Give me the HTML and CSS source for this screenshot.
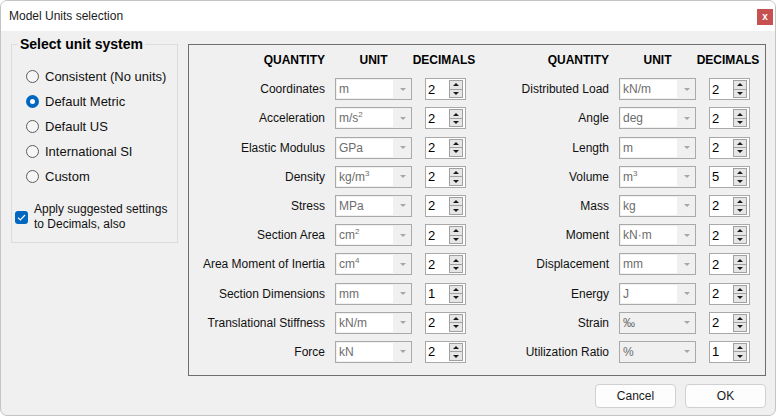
FILE: index.html
```html
<!DOCTYPE html>
<html lang="en">
  <head>
    <meta charset="utf-8" />
    <title>Model Units selection</title>
    <link rel="stylesheet" href="styles.css">
  </head>
  <body>
    <div class="window">
      <div class="titlebar">
        <span class="title">Model Units selection</span>
        <span class="close">x</span>
      </div>

      <div class="client">
        <div class="top">
          <fieldset class="system">
            <legend>Select unit system</legend>
            <div class="radio"><span class="dot"></span>Consistent (No units)</div>
            <div class="radio on"><span class="dot"></span>Default Metric</div>
            <div class="radio"><span class="dot"></span>Default US</div>
            <div class="radio"><span class="dot"></span>International SI</div>
            <div class="radio"><span class="dot"></span>Custom</div>
            <div class="check">
              <span class="box">
                <svg width="9" height="7" viewBox="0 0 9 7"><path d="M1 3.6 L3.4 6 L8 1" fill="none" stroke="#fff" stroke-width="1.2"/></svg>
              </span>
              <span>Apply suggested settings<br>to Decimals, also</span>
            </div>
          </fieldset>

          <div class="units">
            <div class="col">
              <span class="head qty">QUANTITY</span>
              <span class="head">UNIT</span>
              <span class="head">DECIMALS</span>

              <span class="qlabel">Coordinates</span>
              <div class="combo"><span class="field">m</span><span class="arrow"></span></div>
              <div class="spin"><span class="val">2</span><span class="btns"><i class="up"></i><i class="down"></i></span></div>

              <span class="qlabel">Acceleration</span>
              <div class="combo"><span class="field">m/s<sup>2</sup></span><span class="arrow"></span></div>
              <div class="spin"><span class="val">2</span><span class="btns"><i class="up"></i><i class="down"></i></span></div>

              <span class="qlabel">Elastic Modulus</span>
              <div class="combo"><span class="field">GPa</span><span class="arrow"></span></div>
              <div class="spin"><span class="val">2</span><span class="btns"><i class="up"></i><i class="down"></i></span></div>

              <span class="qlabel">Density</span>
              <div class="combo"><span class="field">kg/m<sup>3</sup></span><span class="arrow"></span></div>
              <div class="spin"><span class="val">2</span><span class="btns"><i class="up"></i><i class="down"></i></span></div>

              <span class="qlabel">Stress</span>
              <div class="combo"><span class="field">MPa</span><span class="arrow"></span></div>
              <div class="spin"><span class="val">2</span><span class="btns"><i class="up"></i><i class="down"></i></span></div>

              <span class="qlabel">Section Area</span>
              <div class="combo"><span class="field">cm<sup>2</sup></span><span class="arrow"></span></div>
              <div class="spin"><span class="val">2</span><span class="btns"><i class="up"></i><i class="down"></i></span></div>

              <span class="qlabel">Area Moment of Inertia</span>
              <div class="combo"><span class="field">cm<sup>4</sup></span><span class="arrow"></span></div>
              <div class="spin"><span class="val">2</span><span class="btns"><i class="up"></i><i class="down"></i></span></div>

              <span class="qlabel">Section Dimensions</span>
              <div class="combo"><span class="field">mm</span><span class="arrow"></span></div>
              <div class="spin"><span class="val">1</span><span class="btns"><i class="up"></i><i class="down"></i></span></div>

              <span class="qlabel">Translational Stiffness</span>
              <div class="combo"><span class="field">kN/m</span><span class="arrow"></span></div>
              <div class="spin"><span class="val">2</span><span class="btns"><i class="up"></i><i class="down"></i></span></div>

              <span class="qlabel">Force</span>
              <div class="combo"><span class="field">kN</span><span class="arrow"></span></div>
              <div class="spin"><span class="val">2</span><span class="btns"><i class="up"></i><i class="down"></i></span></div>
            </div>

            <div class="col">
              <span class="head qty">QUANTITY</span>
              <span class="head">UNIT</span>
              <span class="head">DECIMALS</span>

              <span class="qlabel">Distributed Load</span>
              <div class="combo"><span class="field">kN/m</span><span class="arrow"></span></div>
              <div class="spin"><span class="val">2</span><span class="btns"><i class="up"></i><i class="down"></i></span></div>

              <span class="qlabel">Angle</span>
              <div class="combo"><span class="field">deg</span><span class="arrow"></span></div>
              <div class="spin"><span class="val">2</span><span class="btns"><i class="up"></i><i class="down"></i></span></div>

              <span class="qlabel">Length</span>
              <div class="combo"><span class="field">m</span><span class="arrow"></span></div>
              <div class="spin"><span class="val">2</span><span class="btns"><i class="up"></i><i class="down"></i></span></div>

              <span class="qlabel">Volume</span>
              <div class="combo"><span class="field">m<sup>3</sup></span><span class="arrow"></span></div>
              <div class="spin"><span class="val">5</span><span class="btns"><i class="up"></i><i class="down"></i></span></div>

              <span class="qlabel">Mass</span>
              <div class="combo"><span class="field">kg</span><span class="arrow"></span></div>
              <div class="spin"><span class="val">2</span><span class="btns"><i class="up"></i><i class="down"></i></span></div>

              <span class="qlabel">Moment</span>
              <div class="combo"><span class="field">kN·m</span><span class="arrow"></span></div>
              <div class="spin"><span class="val">2</span><span class="btns"><i class="up"></i><i class="down"></i></span></div>

              <span class="qlabel">Displacement</span>
              <div class="combo"><span class="field">mm</span><span class="arrow"></span></div>
              <div class="spin"><span class="val">2</span><span class="btns"><i class="up"></i><i class="down"></i></span></div>

              <span class="qlabel">Energy</span>
              <div class="combo"><span class="field">J</span><span class="arrow"></span></div>
              <div class="spin"><span class="val">2</span><span class="btns"><i class="up"></i><i class="down"></i></span></div>

              <span class="qlabel">Strain</span>
              <div class="combo locked"><span class="field">‰</span><span class="arrow"></span></div>
              <div class="spin"><span class="val">2</span><span class="btns"><i class="up"></i><i class="down"></i></span></div>

              <span class="qlabel">Utilization Ratio</span>
              <div class="combo locked"><span class="field">%</span><span class="arrow"></span></div>
              <div class="spin"><span class="val">1</span><span class="btns"><i class="up"></i><i class="down"></i></span></div>
            </div>
          </div>
        </div>

        <div class="actions">
          <button class="btn">Cancel</button>
          <button class="btn">OK</button>
        </div>
      </div>
    </div>
  </body>
</html>
```

FILE: styles.css
```css
* {
  box-sizing: border-box;
  margin: 0;
  padding: 0;
}

body {
  font-family: "Liberation Sans", Arial, sans-serif;
  font-size: 12px;
  color: #111111;
  background-color: #ffffff;
}

.window {
  width: 776px;
  height: 416px;
  border: 1px solid #c4c4c4;
  border-radius: 7px;
  background-color: #f0f0f0;
  overflow: hidden;
}

.titlebar {
  height: 30px;
  background-color: #ffffff;
  display: flex;
  align-items: center;
  justify-content: space-between;
  padding-left: 8px;
}

.title {
  font-size: 12px;
  color: #1b1b1b;
}

.close {
  width: 16px;
  height: 16px;
  margin-right: 2px;
  margin-top: 1px;
  background-color: #c75050;
  color: #ffffff;
  font-weight: bold;
  font-size: 10px;
  line-height: 15px;
  text-align: center;
}

.client {
  padding: 4px 9px 0 10px;
}

.top {
  display: flex;
  align-items: flex-start;
  gap: 10px;
}

/* left group box */

.system {
  width: 167px;
  border: 1px solid #dcdcdc;
  padding: 11px 3px 10px 3px;
}

.system legend {
  font-size: 14px;
  font-weight: bold;
  line-height: 18px;
  color: #000000;
  padding: 0 2px;
  margin-left: 3px;
}

.radio {
  height: 25px;
  display: flex;
  align-items: center;
  gap: 6px;
  padding-left: 11px;
  font-size: 13px;
}

.radio .dot {
  width: 13px;
  height: 13px;
  border: 1px solid #5c5c5c;
  border-radius: 50%;
  background-color: #f6f6f6;
}

.radio.on .dot {
  border: 4px solid #0067c0;
  background-color: #ffffff;
}

.check {
  margin-top: 13px;
  display: flex;
  align-items: center;
  gap: 6px;
  line-height: 15px;
}

.check .box {
  width: 13px;
  height: 13px;
  border-radius: 3px;
  background-color: #0067c0;
  display: flex;
  align-items: center;
  justify-content: center;
}

/* right group box */

.units {
  width: 578px;
  margin-top: 9px;
  border: 1px solid #6e6e6e;
  padding: 4px 15px 12px 6px;
  display: flex;
  gap: 13px;
}

.col {
  display: grid;
  grid-template-columns: 130px 77px 44px;
  grid-auto-rows: 22px;
  column-gap: 10px;
  row-gap: 7.2px;
  align-items: center;
}

.head {
  font-weight: bold;
  color: #000000;
  white-space: nowrap;
  justify-self: center;
}

.head.qty,
.qlabel {
  justify-self: end;
}

.qlabel {
  white-space: nowrap;
}

.combo {
  height: 22px;
  border: 1px solid #a9a9a9;
  background-color: #f0f0f0;
  display: flex;
}

.combo .field {
  width: 56px;
  margin: 1px;
  padding-left: 2px;
  background-color: #ffffff;
  color: #6d6d6d;
  line-height: 18px;
}

.combo.locked .field {
  background-color: transparent;
}

.combo sup {
  font-size: 8px;
  vertical-align: 5px;
  line-height: 0;
}

.combo .arrow {
  flex: 1;
  display: flex;
  align-items: center;
  justify-content: center;
}

.combo .arrow::after {
  content: "";
  border-left: 3px solid transparent;
  border-right: 3px solid transparent;
  border-top: 3px solid #a6a6a6;
}

.spin {
  width: 41px;
  height: 22px;
  justify-self: end;
  border: 1px solid #a9a9a9;
  background-color: #ffffff;
  display: flex;
  align-items: center;
  justify-content: space-between;
  padding: 1px 2px 1px 2px;
}

.spin .val {
  font-size: 13px;
  color: #000000;
}

.spin .btns {
  width: 14px;
  height: 18px;
  display: flex;
  flex-direction: column;
  border: 1px solid #a0a0a0;
  background-color: #e6e6e6;
}

.spin .btns i {
  flex: 1;
  display: flex;
  align-items: center;
  justify-content: center;
}

.spin .btns i.down {
  border-top: 1px solid #a0a0a0;
}

.spin .btns i.up::after {
  content: "";
  border-left: 3px solid transparent;
  border-right: 3px solid transparent;
  border-bottom: 3px solid #1a1a1a;
}

.spin .btns i.down::after {
  content: "";
  border-left: 3px solid transparent;
  border-right: 3px solid transparent;
  border-top: 3px solid #1a1a1a;
}

/* dialog buttons */

.actions {
  display: flex;
  justify-content: flex-end;
  gap: 9px;
  margin-top: 8px;
}

.btn {
  width: 81px;
  height: 24px;
  border: 1px solid #d0d0d0;
  border-radius: 4px;
  background-color: #fdfdfd;
  font-family: "Liberation Sans", Arial, sans-serif;
  font-size: 12px;
  color: #1a1a1a;
}
```
